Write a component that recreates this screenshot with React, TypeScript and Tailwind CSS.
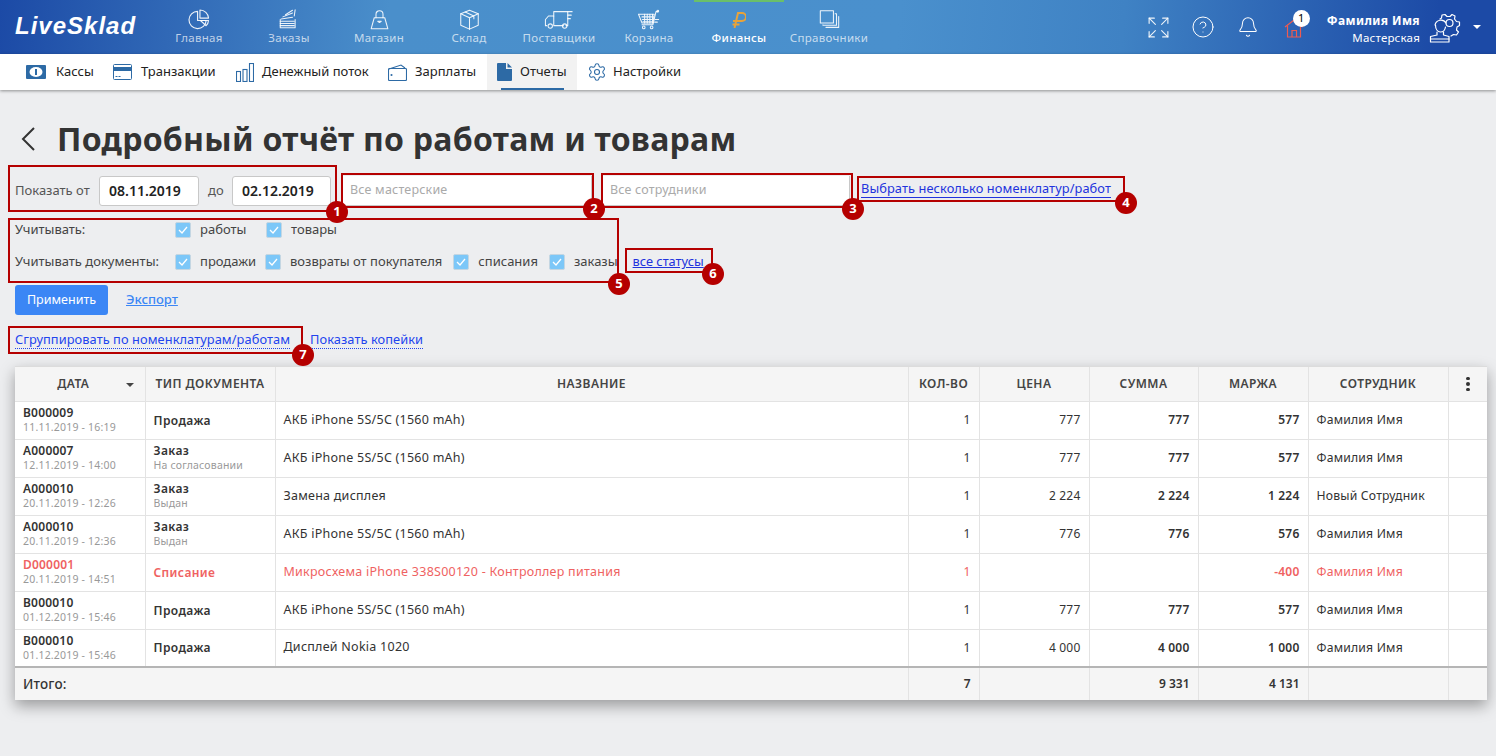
import React from 'react';
import { Bell, CircleHelp, Expand, Settings } from 'lucide-react';

const strokeProps = { fill: 'none', stroke: 'currentColor', strokeWidth: 1.2, strokeLinecap: 'round', strokeLinejoin: 'round' } as const;

const PieIcon = () => (
  <svg width="22" height="21" viewBox="0 0 22 22" {...strokeProps}>
    <path d="M9.500 2.500a9 9 0 1 0 9 9.500h-9z" />
    <path d="M12 1v8.500h9A9 9 0 0 0 12 1z" />
    <path d="M12.500 12H21a9 9 0 0 1-2.500 5.500z" />
  </svg>
);
const OrdersIcon = () => (
  <svg width="22" height="21" viewBox="0 0 24 24" {...strokeProps}>
    <path d="M2 12v9.500h17V12" />
    <path d="M2 14h16M2 16.500h16M2 19h16" />
    <path d="M3 11.500l13-2M5 9l11-4.500M8 6.500l8-5M18 8l1-7" />
  </svg>
);
const BagIcon = () => (
  <svg width="21" height="21" viewBox="0 0 24 24" {...strokeProps}>
    <path d="M6 10L2.500 22.500h19L18 10z" />
    <path d="M8 10V6a4 4 0 0 1 8 0v4" />
    <path d="M10 14h4l-2 1.500z" />
  </svg>
);
const BoxIcon = () => (
  <svg width="21" height="21" viewBox="0 0 24 24" {...strokeProps}>
    <path d="M12 1.500l10 4v13l-10 4.500L2 18.500v-13z" />
    <path d="M2 5.500l10 4.500L22 5.500M12 10v13M7 3.500l10 4.500v3" />
  </svg>
);
const TruckIcon = () => (
  <svg width="32" height="21" viewBox="0 0 34 24" {...strokeProps}>
    <path d="M11 19h11M3 19H1.500v-7L5 8h6v11" />
    <path d="M11 8V3h16v16h-2" />
    <circle cx="7" cy="19.500" r="2.500" />
    <circle cx="23.500" cy="19.500" r="2.500" />
    <path d="M27 3h5M27 7h4M27 11h3" />
  </svg>
);
const CartIcon = () => (
  <svg width="24" height="21" viewBox="0 0 26 24" {...strokeProps}>
    <path d="M1 6h18l-1.500 10H5z" />
    <path d="M5 9h13M5.500 12h12M6 14.500h11M8 6v10M11 6v10M14 6v10M17 6v10" />
    <path d="M5 18h12.500L21 3h2" />
    <circle cx="7" cy="21" r="1.500" />
    <circle cx="16" cy="21" r="1.500" />
    <circle cx="23" cy="2.500" r="1" />
    <path d="M20 12h4M19.500 15h3" />
  </svg>
);
const RubleIcon = () => (
  <svg width="14" height="16" viewBox="0 0 14 16" fill="none" stroke="#e8a33a" strokeWidth="2">
    <path d="M2.500 16L6 1h4a3.500 3.500 0 0 1 0 8H1M0.500 12.500h7" />
  </svg>
);
const BooksIcon = () => (
  <svg width="23" height="21" viewBox="0 0 24 24" {...strokeProps}>
    <path d="M1.500 2h15v14h-15z" />
    <path d="M18.500 5.500H20v13H4.500V18M22.500 8.500V21H8" />
  </svg>
);
const HomeIcon = () => (
  <svg width="20" height="20" viewBox="0 0 20 20" fill="none" stroke="#ef5b4f" strokeWidth="1.200">
    <path d="M1 9l9-7 9 7" />
    <path d="M3.500 7.500V19h13V7.500" />
    <path d="M8 19v-6.500h4.500V19" />
  </svg>
);
const UserGearIcon = () => (
  <svg width="34" height="34" viewBox="0 0 34 34" {...strokeProps}>
    <path d="M12 9l1.500-1 .5-3 3-.5 2 2h3l2-2 3 1.500-.5 3 2 2.500 3 .5v3.500l-2.500 1.500-.5 3 2 2-2 3-3-.5-2.500 1.500" />
    <circle cx="21.500" cy="13" r="3.500" />
    <path d="M7 15a6 6 0 0 1 11-2M7.500 15c0 4 2 7 5 7s4.500-2 5-5" />
    <path d="M9 22v3l-6.500 1.500V32H21v-5.500L15.500 25v-3" />
    <path d="M2.500 29H21" />
  </svg>
);

const MoneyIcon = () => (
  <svg width="20" height="14" viewBox="0 0 20 14">
    <rect x="0" y="0" width="20" height="14" rx="1" fill="#2d6aa5" />
    <ellipse cx="10" cy="7" rx="6.500" ry="5" fill="#fff" />
    <rect x="9" y="4" width="2" height="6" fill="#2d6aa5" />
  </svg>
);
const CardIcon = () => (
  <svg width="19" height="16" viewBox="0 0 19 16">
    <rect x="0.500" y="0.500" width="18" height="15" rx="1" fill="#fff" stroke="#2d6aa5" />
    <rect x="1" y="3" width="17" height="4" fill="#2d6aa5" />
    <path d="M2.500 12.500h2M5.500 12.500h2" stroke="#2d6aa5" />
  </svg>
);
const BarsIcon = () => (
  <svg width="18" height="19" viewBox="0 0 18 19" fill="none" stroke="#2d6aa5" strokeWidth="1.100">
    <rect x="0.500" y="8.500" width="4" height="10" />
    <rect x="7" y="6.500" width="4" height="12" />
    <rect x="13.500" y="0.500" width="4" height="18" />
  </svg>
);
const WalletIcon = () => (
  <svg width="19" height="17" viewBox="0 0 19 17" fill="none" stroke="#2d6aa5" strokeWidth="1.100">
    <path d="M1 5L13 1l4 3" />
    <rect x="0.500" y="4.500" width="18" height="12" rx="1" />
    <circle cx="3.500" cy="11" r="0.500" />
  </svg>
);
const DocIcon = () => (
  <svg width="15" height="18" viewBox="0 0 15 18">
    <path d="M1 0h8v6h6v11a1 1 0 0 1-1 1H1a1 1 0 0 1-1-1V1a1 1 0 0 1 1-1z" fill="#2d6aa5" />
    <path d="M10.500 0L15 4.500h-4.500z" fill="#2d6aa5" />
  </svg>
);

const topItems = [
  { label: 'Главная', icon: <PieIcon /> },
  { label: 'Заказы', icon: <OrdersIcon /> },
  { label: 'Магазин', icon: <BagIcon /> },
  { label: 'Склад', icon: <BoxIcon /> },
  { label: 'Поставщики', icon: <TruckIcon /> },
  { label: 'Корзина', icon: <CartIcon /> },
  { label: 'Финансы', active: true, icon: <RubleIcon /> },
  { label: 'Справочники', icon: <BooksIcon /> },
];

const subItems = [
  { label: 'Кассы', width: 'w-[87px]', gap: 'gap-[10px]', icon: <MoneyIcon /> },
  { label: 'Транзакции', width: 'w-[123px]', gap: 'gap-[9px]', icon: <CardIcon /> },
  { label: 'Денежный поток', width: 'w-[152px]', gap: 'gap-[8px]', icon: <BarsIcon /> },
  { label: 'Зарплаты', width: 'w-[109px]', gap: 'gap-[8px]', icon: <WalletIcon /> },
  { label: 'Отчеты', width: 'w-[90px]', gap: 'gap-[8px]', icon: <DocIcon />, active: true },
  { label: 'Настройки', width: 'w-[113px]', gap: 'gap-[6px]', icon: <Settings size={20} strokeWidth={1.3} className="text-[#2d6aa5]" /> },
];

const rows = [
  { id: 'B000009', date: '11.11.2019 - 16:19', type: 'Продажа', name: 'АКБ iPhone 5S/5C (1560 mAh)', qty: '1', price: '777', sum: '777', margin: '577', staff: 'Фамилия Имя' },
  { id: 'A000007', date: '12.11.2019 - 14:00', type: 'Заказ', status: 'На согласовании', name: 'АКБ iPhone 5S/5C (1560 mAh)', qty: '1', price: '777', sum: '777', margin: '577', staff: 'Фамилия Имя' },
  { id: 'A000010', date: '20.11.2019 - 12:26', type: 'Заказ', status: 'Выдан', name: 'Замена дисплея', qty: '1', price: '2 224', sum: '2 224', margin: '1 224', staff: 'Новый Сотрудник' },
  { id: 'A000010', date: '20.11.2019 - 12:36', type: 'Заказ', status: 'Выдан', name: 'АКБ iPhone 5S/5C (1560 mAh)', qty: '1', price: '776', sum: '776', margin: '576', staff: 'Фамилия Имя' },
  { id: 'D000001', date: '20.11.2019 - 14:51', type: 'Списание', name: 'Микросхема iPhone 338S00120 - Контроллер питания', qty: '1', price: '', sum: '', margin: '-400', staff: 'Фамилия Имя', red: true },
  { id: 'B000010', date: '01.12.2019 - 15:46', type: 'Продажа', name: 'АКБ iPhone 5S/5C (1560 mAh)', qty: '1', price: '777', sum: '777', margin: '577', staff: 'Фамилия Имя' },
  { id: 'B000010', date: '01.12.2019 - 15:46', type: 'Продажа', name: 'Дисплей Nokia 1020', qty: '1', price: '4 000', sum: '4 000', margin: '1 000', staff: 'Фамилия Имя' },
];

const Check = ({ label, width }: { label: string; width?: string }) => (
  <label className={`flex items-center gap-[9px] mr-[11px] ${width ?? ''}`}>
    <span className="w-[16px] h-[16px] rounded-[2px] bg-[#7cc7f8] border border-[#c4d6e2] flex items-center justify-center shrink-0">
      <svg width="10" height="8" viewBox="0 0 10 8" fill="none" stroke="#fff" strokeWidth="1.300"><path d="M1 4l3 3 5-6" /></svg>
    </span>
    <span>{label}</span>
  </label>
);

const Badge = ({ n, className }: { n: number; className: string }) => (
  <span className={`absolute w-[22px] h-[22px] rounded-full bg-[#b50000] text-white text-[13px] font-bold flex items-center justify-center ${className}`}>{n}</span>
);

const th = 'border-r border-[#e3e3e3] font-semibold text-[12px] tracking-[0.45px] text-[#444] p-0 h-[34px] border-b';
const td = 'border-r border-b border-[#e3e3e3] p-0 h-[38px] px-[8px]';

export default function App() {
  return (
    <div className="relative min-h-[756px] bg-[#edeef0] [font-family:'Noto_Sans',sans-serif] text-[12px] text-[#333] overflow-hidden">
      {/* top bar */}
      <header className="h-[54px] flex items-stretch text-white bg-[linear-gradient(95deg,#1c4aa6_0%,#4a8fcb_26%,#4a90cd_60%,#3f82c4_75%,#1c4aa6_96%)]">
        <div className="w-[154px] pl-[15px] pb-[2px] flex items-center text-[24px] font-bold italic tracking-[1px] [font-family:'Liberation_Sans',sans-serif]">LiveSklad</div>
        <nav className="flex">
          {topItems.map((item) => (
            <div key={item.label} className={`w-[90px] flex flex-col items-center pt-[7px] border-t-2 ${item.active ? 'border-[#6abf6a] text-white font-medium' : 'border-transparent text-white/70'}`}>
              <div className="h-[21px] flex items-center justify-center text-white/90">{item.icon}</div>
              <span className="text-[11.500px] leading-[16px] tracking-[0.3px]">{item.label}</span>
            </div>
          ))}
        </nav>
        <div className="ml-auto flex items-center">
          <Expand size={25} strokeWidth={1.100} className="mr-[20px] text-white/90" />
          <CircleHelp size={24} strokeWidth={1} className="mr-[22px]" />
          <Bell size={22} strokeWidth={1.100} className="mr-[25px]" />
          <div className="relative mr-[23px] mt-[2px]">
            <HomeIcon />
            <span className="absolute -top-[8px] left-[9px] w-[17px] h-[17px] rounded-full bg-white text-black text-[11px] flex items-center justify-center">1</span>
          </div>
          <div className="text-right leading-[17px] mr-[8px] mt-[4px]">
            <div className="font-bold text-[12px] tracking-[0.4px]">Фамилия Имя</div>
            <div className="text-[11.500px] tracking-[0.2px]">Мастерская</div>
          </div>
          <UserGearIcon />
          <span className="ml-[11px] mr-[15px] w-0 h-0 border-x-[4px] border-x-transparent border-t-[4px] border-t-white" />
        </div>
      </header>

      {/* sub nav */}
      <div className="h-[36px] pl-[16px] flex bg-white shadow-[0_1px_3px_rgba(0,0,0,0.4)] relative text-[13px] text-[#222]">
        {subItems.map((item) => (
          <div key={item.label} className={`${item.width} ${item.gap} pl-[10px] flex items-center ${item.active ? 'bg-[#f2f2f2] relative' : ''}`}>
            {item.icon}
            <span>{item.label}</span>
            {item.active && <span className="absolute left-[14px] w-[63px] bottom-0 h-[2px] bg-[#2d6aa5]" />}
          </div>
        ))}
      </div>

      {/* title */}
      <div className="flex items-center mt-[28px] h-[42px] pl-[20px]">
        <svg width="16" height="26" viewBox="0 0 16 26" fill="none" stroke="#333" strokeWidth="2"><path d="M14 2L3 13l11 11" /></svg>
        <h1 className="ml-[21px] text-[32px] font-bold text-[#333] tracking-[0.27px]">Подробный отчёт по работам и товарам</h1>
      </div>

      {/* filters */}
      <div className="mt-[15px] pl-[15px] flex items-center h-[31px] text-[13px] text-[#555]">
        <span className="w-[84px]">Показать от</span>
        <div className="w-[100px] h-[30px] flex items-center pl-[9px] bg-white border border-[#c8c8c8] rounded-[3px] text-[14px] font-semibold text-[#222]">08.11.2019</div>
        <span className="ml-[9px] w-[24px]">до</span>
        <div className="w-[99px] h-[30px] flex items-center pl-[9px] bg-white border border-[#c8c8c8] rounded-[3px] text-[14px] font-semibold text-[#222]">02.12.2019</div>
        <div className="ml-[12px] w-[249px] h-[30px] flex items-center pl-[7px] bg-white border-b border-r border-[#c8c8c8] text-[#aaa] text-[12.500px] tracking-[0.2px]">Все мастерские</div>
        <div className="ml-[11px] w-[247px] h-[30px] flex items-center pl-[7px] bg-white border-b border-r border-[#c8c8c8] text-[#aaa] text-[12.500px] tracking-[0.2px]">Все сотрудники</div>
        <a className="ml-[11px] -mt-[3px] text-[#2233dd] border-b border-[#2233dd] leading-[17px] tracking-[0.1px] text-[12.800px]">Выбрать несколько номенклатур/работ</a>
      </div>

      <div className="mt-[8px] pl-[15px] flex items-center h-[32px] text-[13px] text-[#444]">
        <span className="w-[160px]">Учитывать:</span>
        <Check label="работы" width="w-[80px]" />
        <Check label="товары" />
      </div>
      <div className="pl-[15px] flex items-center h-[32px] text-[13px] text-[#444]">
        <span className="w-[160px]">Учитывать документы:</span>
        <Check label="продажи" width="w-[79px]" />
        <Check label="возвраты от покупателя" />
        <Check label="списания" />
        <Check label="заказы" />
        <a className="ml-[4px] text-[12.800px] text-[#2233dd] underline">все статусы</a>
      </div>

      <div className="mt-[7px] pl-[15px] flex items-center text-[13px]">
        <button className="w-[93px] h-[30px] rounded-[3px] bg-[#3b86f5] text-white text-[12.500px]">Применить</button>
        <a className="ml-[18px] text-[#3b86f5] underline font-medium">Экспорт</a>
      </div>

      <div className="mt-[16px] pl-[15px] flex items-center h-[18px] text-[12.800px] tracking-[0.08px] text-[#2244ee]">
        <a className="border-b border-dotted border-[#2244ee] leading-[17px]">Сгруппировать по номенклатурам/работам</a>
        <a className="ml-[20px] border-b border-dotted border-[#2244ee] leading-[17px]">Показать копейки</a>
      </div>

      {/* table */}
      <div className="mt-[17px] mr-[9px] ml-[15px] bg-white shadow-[0_6px_14px_rgba(0,0,0,0.35)] border-t border-[#dcdcdc]">
        <table className="w-full table-fixed border-collapse">
          <colgroup>
            <col className="w-[130px]" />
            <col className="w-[130px]" />
            <col className="w-[633px]" />
            <col className="w-[71px]" />
            <col className="w-[110px]" />
            <col className="w-[109px]" />
            <col className="w-[110px]" />
            <col className="w-[140px]" />
            <col />
          </colgroup>
          <thead className="bg-[#f5f5f5]">
            <tr>
              <th className={`${th} relative pr-[13px]`}>
                ДАТА
                <span className="absolute right-[11px] top-[16px] w-0 h-0 border-x-[4px] border-x-transparent border-t-[4px] border-t-[#444]" />
              </th>
              <th className={th}>ТИП ДОКУМЕНТА</th>
              <th className={th}>НАЗВАНИЕ</th>
              <th className={th}>КОЛ-ВО</th>
              <th className={th}>ЦЕНА</th>
              <th className={th}>СУММА</th>
              <th className={th}>МАРЖА</th>
              <th className={th}>СОТРУДНИК</th>
              <th className={`${th} border-r-0 text-[15px] font-bold`}>
                <span className="flex flex-col items-center gap-[2px]">
                  <i className="w-[3.500px] h-[3.500px] rounded-full bg-[#333]" />
                  <i className="w-[3.500px] h-[3.500px] rounded-full bg-[#333]" />
                  <i className="w-[3.500px] h-[3.500px] rounded-full bg-[#333]" />
                </span>
              </th>
            </tr>
          </thead>
          <tbody className="tracking-[0.2px]">
            {rows.map((r, i) => (
              <tr key={i} className={r.red ? 'text-[#ef6262]' : 'text-[#333]'}>
                <td className={td}>
                  <div className="font-semibold leading-[15px]">{r.id}</div>
                  <div className="text-[10.500px] leading-[15px] text-[#999]">{r.date}</div>
                </td>
                <td className={td}>
                  <div className="font-semibold leading-[15px] tracking-[0.4px]">{r.type}</div>
                  {r.status && <div className="text-[10.500px] leading-[15px] text-[#999]">{r.status}</div>}
                </td>
                <td className={`${td} text-[12.500px] tracking-[0.25px]`}>{r.name}</td>
                <td className={`${td} text-right`}>{r.qty}</td>
                <td className={`${td} text-right`}>{r.price}</td>
                <td className={`${td} text-right font-semibold`}>{r.sum}</td>
                <td className={`${td} text-right font-semibold`}>{r.margin}</td>
                <td className={`${td} text-[12.200px]`}>{r.staff}</td>
                <td className={`${td} border-r-0`} />
              </tr>
            ))}
          </tbody>
          <tfoot className="bg-[#f5f5f5] border-t-2 border-[#b5b5b5] font-semibold text-[#333]">
            <tr>
              <td colSpan={3} className="h-[33px] px-[8px] border-r border-[#e3e3e3] text-[13.500px] font-medium tracking-[0.2px]">Итого:</td>
              <td className="px-[8px] text-right border-r border-[#e3e3e3]">7</td>
              <td className="border-r border-[#e3e3e3]" />
              <td className="px-[8px] text-right border-r border-[#e3e3e3]">9 331</td>
              <td className="px-[8px] text-right border-r border-[#e3e3e3]">4 131</td>
              <td className="border-r border-[#e3e3e3]" />
              <td />
            </tr>
          </tfoot>
        </table>
      </div>

      {/* red annotation frames over the screen */}
      <div className="absolute left-[8px] top-[165px] w-[329px] h-[47px] border-2 border-[#b50000]" />
      <Badge n={1} className="left-[326px] top-[201px]" />
      <div className="absolute left-[341px] top-[173px] w-[253px] h-[35px] border-2 border-[#b50000]" />
      <Badge n={2} className="left-[583px] top-[198px]" />
      <div className="absolute left-[601px] top-[173px] w-[252px] h-[35px] border-2 border-[#b50000]" />
      <Badge n={3} className="left-[842px] top-[198px]" />
      <div className="absolute left-[857px] top-[176px] w-[268px] h-[26px] border-2 border-[#b50000]" />
      <Badge n={4} className="left-[1115px] top-[192px]" />
      <div className="absolute left-[8px] top-[218px] w-[611px] h-[65px] border-2 border-[#b50000]" />
      <Badge n={5} className="left-[608px] top-[273px]" />
      <div className="absolute left-[625px] top-[248px] w-[88px] h-[25px] border-2 border-[#b50000]" />
      <Badge n={6} className="left-[702px] top-[263px]" />
      <div className="absolute left-[8px] top-[326px] w-[295px] h-[28px] border-2 border-[#b50000]" />
      <Badge n={7} className="left-[292px] top-[344px]" />
    </div>
  );
}
